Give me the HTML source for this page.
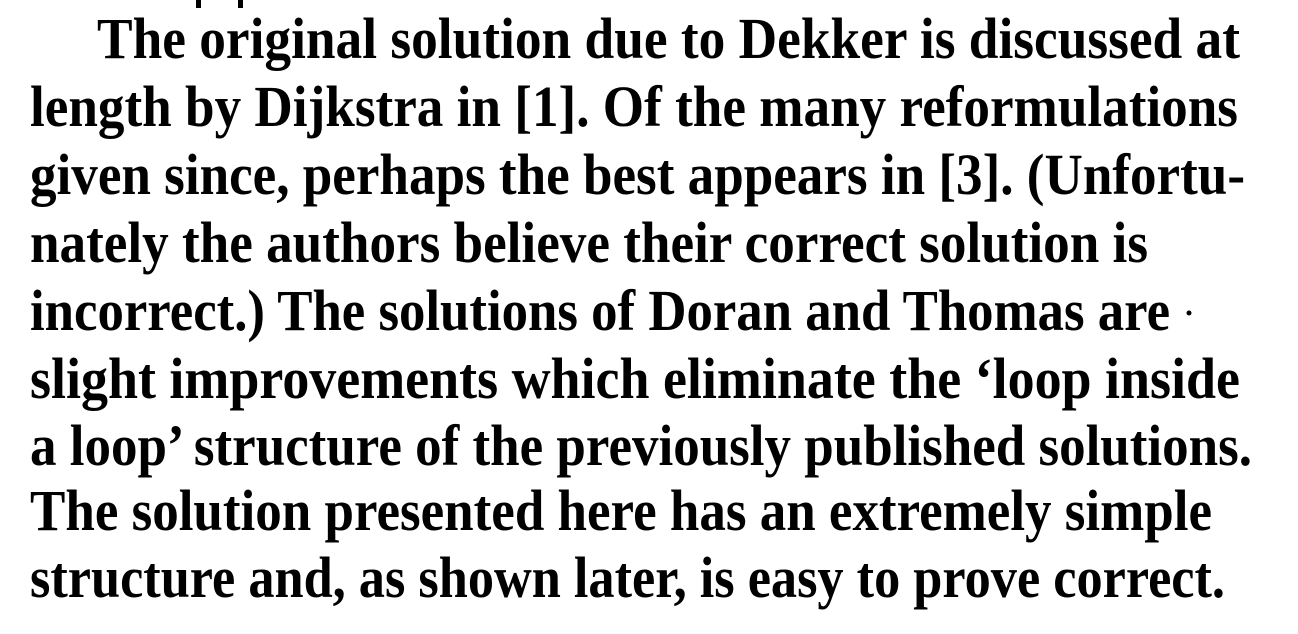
<!DOCTYPE html>
<html><head><meta charset="utf-8"><style>
html,body{margin:0;padding:0;background:#fff;}
svg{display:block}
text{font-family:"Liberation Serif",serif;font-weight:bold;font-size:58px;fill:#000;}
</style></head><body>
<svg width="1298" height="634" viewBox="0 0 1298 634" xmlns="http://www.w3.org/2000/svg">
<rect x="196" y="0" width="5" height="8" fill="#000"/>
<rect x="238" y="0" width="5" height="8" fill="#000"/>
<text x="97" y="58" textLength="1143" lengthAdjust="spacingAndGlyphs">The original solution due to Dekker is discussed at</text>
<text x="30" y="126" textLength="1208" lengthAdjust="spacingAndGlyphs">length by Dijkstra in [1]. Of the many reformulations</text>
<text x="30" y="194" textLength="1215" lengthAdjust="spacingAndGlyphs">given since, perhaps the best appears in [3]. (Unfortu-</text>
<text x="30" y="262" textLength="1118" lengthAdjust="spacingAndGlyphs">nately the authors believe their correct solution is</text>
<text x="30" y="330" textLength="1140" lengthAdjust="spacingAndGlyphs">incorrect.) The solutions of Doran and Thomas are</text>
<circle cx="1189" cy="313" r="2.5" fill="#000"/>
<text x="30" y="398" textLength="1210" lengthAdjust="spacingAndGlyphs">slight improvements which eliminate the ‘loop inside</text>
<text x="30" y="465" textLength="1222" lengthAdjust="spacingAndGlyphs">a loop’ structure of the previously published solutions.</text>
<text x="30" y="530" textLength="1182" lengthAdjust="spacingAndGlyphs">The solution presented here has an extremely simple</text>
<text x="30" y="597" textLength="1195" lengthAdjust="spacingAndGlyphs">structure and, as shown later, is easy to prove correct.</text>
</svg>
</body></html>
